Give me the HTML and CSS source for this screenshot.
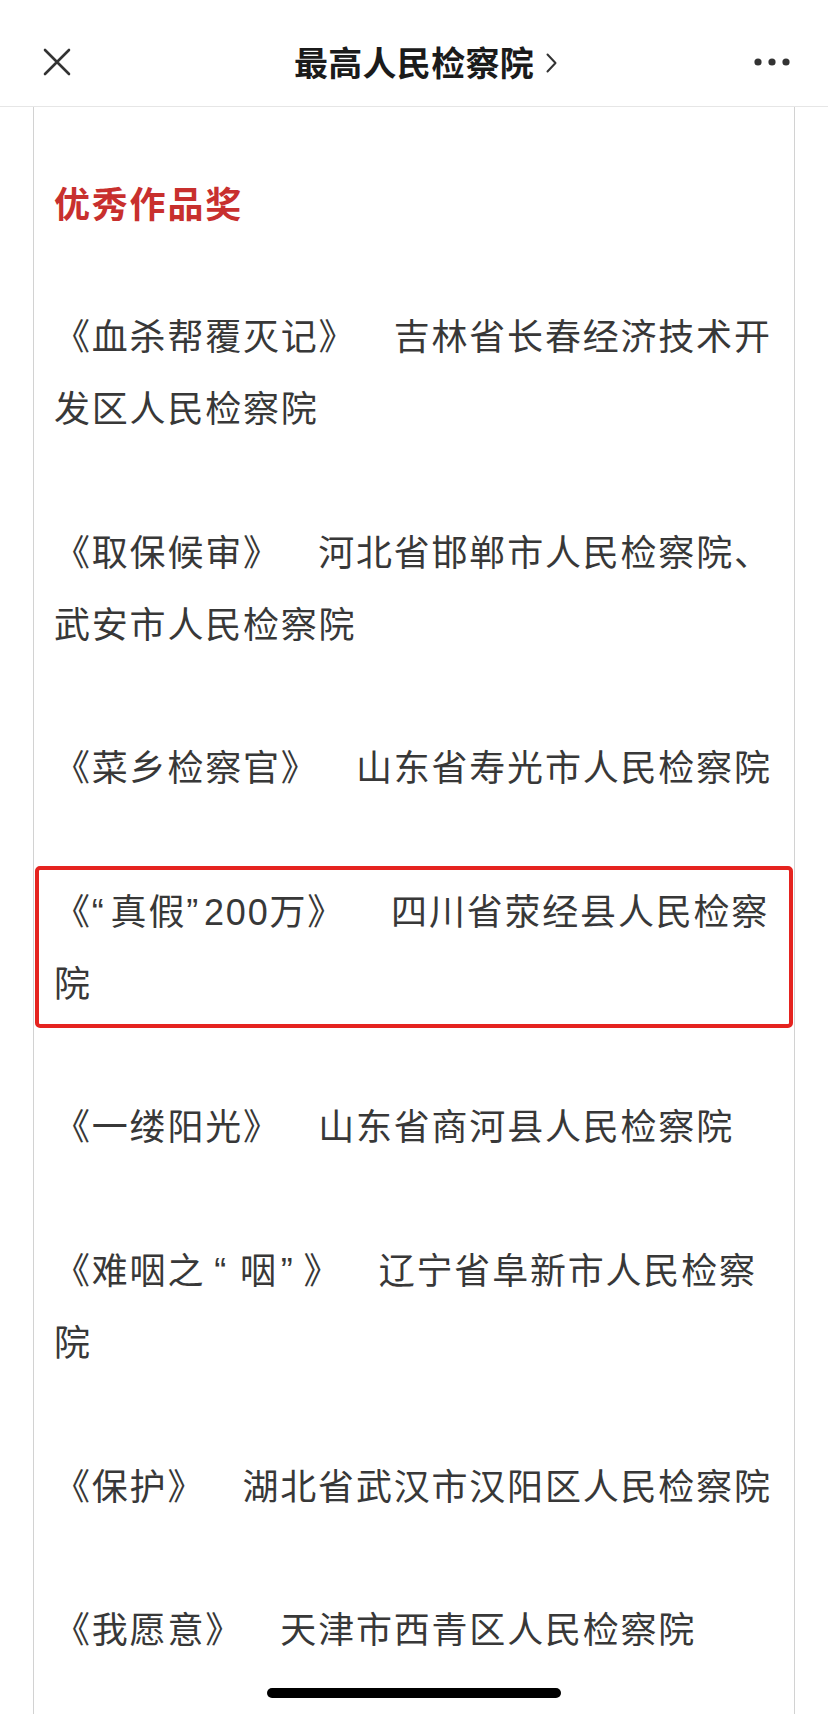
FILE: index.html
```html
<!DOCTYPE html>
<html lang="zh-CN">
<head>
<meta charset="utf-8">
<title>最高人民检察院</title>
<link rel="stylesheet" href="styles.css">
</head>
<body>
<header class="topbar">
  <div class="nav-left">
    <svg class="close" width="28" height="28" viewBox="0 0 28 28"><path d="M2 2 L26 26 M26 2 L2 26" stroke="#333" stroke-width="2.6" stroke-linecap="round" fill="none"/></svg>
  </div>
  <div class="title">最高人民检察院<svg class="chev" width="11" height="20" viewBox="0 0 11 20"><polyline points="1.5,1.5 9.5,10 1.5,18.5" stroke="#333" stroke-width="2" fill="none" stroke-linecap="round" stroke-linejoin="round"/></svg></div>
  <div class="nav-right">
    <svg class="more" width="36" height="8" viewBox="0 0 36 8"><circle cx="4" cy="4" r="3.6" fill="#333"/><circle cx="18" cy="4" r="3.6" fill="#333"/><circle cx="32" cy="4" r="3.6" fill="#333"/></svg>
  </div>
</header>
<main class="article">
  <h2 class="award">优秀作品奖</h2>
  <div class="list">
    <p class="entry">《血杀帮覆灭记》<span class="sep">　</span>吉林省长春经济技术开发区人民检察院</p>
    <p class="entry">《取保候审》<span class="sep">　</span>河北省邯郸市人民检察院、武安市人民检察院</p>
    <p class="entry">《菜乡检察官》<span class="sep">　</span>山东省寿光市人民检察院</p>
    <div class="mark"><p class="entry">《<span class="q-open">“</span>真假<span class="q-close">”</span>200万》<span class="sep wide">　</span>四川省荥经县人民检察院</p></div>
    <p class="entry">《一缕阳光》<span class="sep">　</span>山东省商河县人民检察院</p>
    <p class="entry">《难咽之<span class="q-open loose">“</span>咽<span class="q-close loose">”</span>》<span class="sep">　</span>辽宁省阜新市人民检察院</p>
    <p class="entry">《保护》<span class="sep">　</span>湖北省武汉市汉阳区人民检察院</p>
    <p class="entry">《我愿意》<span class="sep">　</span>天津市西青区人民检察院</p>
  </div>
</main>
<div class="home-bar"></div>
</body>
</html>
```
FILE: styles.css
```css
html, body {
  margin: 0;
  padding: 0;
  background: #fff;
}
body {
  position: relative;
  height: 1714px;
  overflow: hidden;
  font-family: "Liberation Sans", "Noto Sans CJK SC", sans-serif;
}
.topbar {
  box-sizing: border-box;
  height: 107px;
  padding-top: 18px;
  border-bottom: 1px solid #e6e6e6;
  display: grid;
  grid-template-columns: 1fr auto 1fr;
  align-items: center;
}
.nav-left {
  padding-left: 43px;
  display: flex;
  align-items: center;
}
.nav-right {
  padding-right: 38px;
  display: flex;
  justify-content: flex-end;
  align-items: center;
}
.close, .more { display: block; }
.title {
  font-family: "Noto Sans CJK SC", sans-serif;
  font-size: 34px;
  font-weight: 700;
  color: #1b1b1b;
  line-height: 40px;
  letter-spacing: 0.3px;
  display: flex;
  align-items: center;
}
.chev {
  display: block;
  margin-left: 12px;
  margin-right: -23px;
  margin-top: 2px;
}
.article {
  box-sizing: border-box;
  margin-left: 33px;
  width: 762px;
  height: 1607px;
  border-left: 1px solid #d2d2d2;
  border-right: 1px solid #d2d2d2;
  padding: 59px 0 0 20px;
}
.award {
  margin: 0;
  font-family: "Noto Sans CJK SC", sans-serif;
  font-size: 36px;
  font-weight: 700;
  line-height: 72px;
  letter-spacing: 1.8px;
  color: #c8302e;
}
.list {
  margin-top: 64px;
  display: flex;
  flex-direction: column;
  gap: 71.6px;
}
.entry {
  margin: 0;
  font-size: 36px;
  line-height: 72px;
  letter-spacing: 1.8px;
  color: #383838;
  width: 740px;
}
.sep {
  font-family: "Noto Sans CJK SC", sans-serif;
  letter-spacing: 19.3px;
  line-height: 1;
}
.sep.wide {
  letter-spacing: 28px;
}
.q-open, .q-close {
  line-height: 1;
}
.q-open {
  margin-right: 5px;
}
.q-close {
  margin-right: 4px;
}
.q-open.loose {
  margin-left: 9px;
  margin-right: 12px;
}
.q-close.loose {
  margin-left: 3px;
  margin-right: 9px;
}
.mark {
  margin: -11px 0 -7px -19px;
  width: 758px;
  box-sizing: border-box;
  border: 4px solid #e5231f;
  border-radius: 5px;
  padding: 7px 0 3px 15px;
}
.mark .entry {
  width: 740px;
}
.home-bar {
  position: absolute;
  left: 267px;
  bottom: 16px;
  width: 294px;
  height: 10px;
  border-radius: 5px;
  background: #000;
}
```
